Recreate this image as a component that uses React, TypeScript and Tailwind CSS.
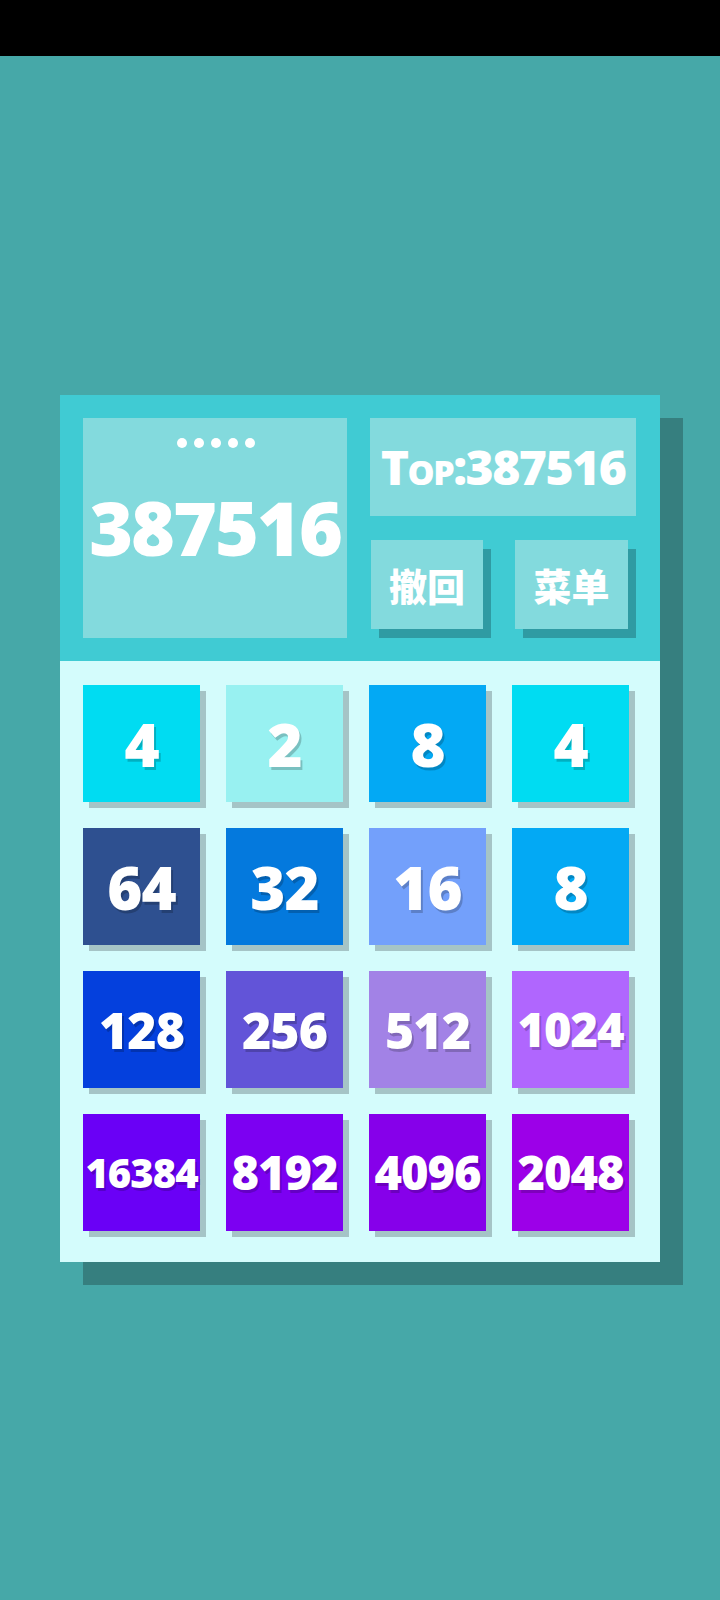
import React from "react";

const tiles: { v: string; bg: string }[] = [
  { v: "4", bg: "bg-[#00dcf2]" },
  { v: "2", bg: "bg-[#98f1f1]" },
  { v: "8", bg: "bg-[#03a9f4]" },
  { v: "4", bg: "bg-[#00dcf2]" },
  { v: "64", bg: "bg-[#2e5090]" },
  { v: "32", bg: "bg-[#0479dd]" },
  { v: "16", bg: "bg-[#73a0fb]" },
  { v: "8", bg: "bg-[#03a9f4]" },
  { v: "128", bg: "bg-[#0440dd]" },
  { v: "256", bg: "bg-[#6254d8]" },
  { v: "512", bg: "bg-[#a282e6]" },
  { v: "1024", bg: "bg-[#b066fe]" },
  { v: "16384", bg: "bg-[#6a00f6]" },
  { v: "8192", bg: "bg-[#7c00f2]" },
  { v: "4096", bg: "bg-[#8600ea]" },
  { v: "2048", bg: "bg-[#9c00e8]" },
];

const sizeFor: Record<number, string> = {
  1: "text-[60px]",
  2: "text-[60px]",
  3: "text-[50px]",
  4: "text-[47px]",
  5: "text-[40px]",
};

const font = "[font-family:'Open_Sans','Noto_Sans_CJK_SC',sans-serif]";

export default function App() {
  return (
    <div className={`w-[720px] h-[1600px] bg-[#46a8a8] flex flex-col ${font}`}>
      <div className="h-[56px] bg-black shrink-0" />
      <div className="pt-[339px] pl-[60px]">
        <div className="w-[600px] shadow-[23px_23px_0_#367f7f]">
          {/* header */}
          <div className="h-[266px] bg-[#40cbd3] flex gap-[23px] p-[23px]">
            <div className="w-[264px] h-[220px] bg-[#83dadd] flex flex-col items-center text-white">
              <div className="flex gap-[7px] mt-[20px] ml-[2px]">
                <span className="w-[10px] h-[10px] rounded-full bg-white" />
                <span className="w-[10px] h-[10px] rounded-full bg-white" />
                <span className="w-[10px] h-[10px] rounded-full bg-white" />
                <span className="w-[10px] h-[10px] rounded-full bg-white" />
                <span className="w-[10px] h-[10px] rounded-full bg-white" />
              </div>
              <div className="mt-[42px] text-[75px] leading-none font-extrabold tracking-[-2px]">
                387516
              </div>
            </div>
            <div className="w-[266px] flex flex-col">
              <div className="h-[98px] bg-[#83dadd] flex items-center justify-center text-white text-[48px] font-extrabold tracking-[-1.5px] [font-variant:small-caps] leading-none">
                Top:387516
              </div>
              <div className="flex gap-[32px] pl-[1px] mt-[24px]">
                <div className="w-[112px] h-[89px] bg-[#83dadd] shadow-[8px_9px_0_#2f9ba3] flex items-center justify-center text-white text-[38px] font-black [font-family:'Noto_Sans_CJK_SC',sans-serif]">
                  撤回
                </div>
                <div className="w-[113px] h-[89px] bg-[#83dadd] shadow-[8px_9px_0_#2f9ba3] flex items-center justify-center text-white text-[38px] font-black [font-family:'Noto_Sans_CJK_SC',sans-serif]">
                  菜单
                </div>
              </div>
            </div>
          </div>
          {/* board */}
          <div className="h-[601px] bg-[#d4fcfc] pt-[24px] pl-[23px]">
            <div className="grid grid-cols-[repeat(4,117px)] gap-[26px]">
              {tiles.map((t, i) => (
                <div
                  key={i}
                  className={`w-[117px] h-[117px] ${t.bg} shadow-[6px_6px_0_#a5c4c6] flex items-center justify-center text-white font-extrabold leading-none tracking-[-1px] [text-shadow:2px_3px_0_rgba(0,0,0,0.2)] ${sizeFor[t.v.length]}`}
                >
                  {t.v}
                </div>
              ))}
            </div>
          </div>
        </div>
      </div>
    </div>
  );
}
